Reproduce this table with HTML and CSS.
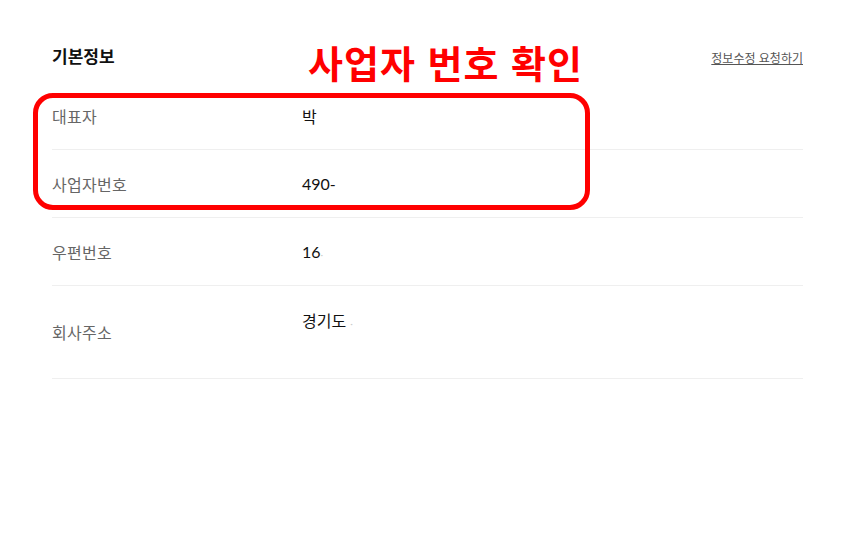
FILE: index.html
```html
<!DOCTYPE html>
<html lang="ko">
<head>
<meta charset="utf-8">
<link rel="stylesheet" href="styles.css">
</head>
<body>
<div class="page">
  <div class="header">
    <h2 class="title">기본정보</h2>
    <a class="edit-link" href="#">정보수정 요청하기</a>
  </div>
  <div class="rows">
    <div class="row"><div class="label">대표자</div><div class="value">박</div></div>
    <div class="row"><div class="label">사업자번호</div><div class="value">490-</div></div>
    <div class="row"><div class="label">우편번호</div><div class="value">16<span class="faint">·</span></div></div>
    <div class="row row-tall"><div class="label">회사주소</div><div class="value value-top">경기도 <span class="faint">·</span></div></div>
  </div>
  <div class="annotation-text">사업자 번호 확인</div>
  <div class="annotation-box"></div>
</div>
</body>
</html>
```
FILE: styles.css
```css
* { box-sizing: border-box; }
html, body { margin: 0; padding: 0; background: #fff; }
body { font-family: Lato, "Noto Sans CJK KR", sans-serif; color: #222; }
.page { position: relative; width: 844px; height: 544px; padding: 0 41px 0 52px; }
.header { display: flex; justify-content: space-between; align-items: center; height: 82px; padding-top: 28px; }
.title { margin: 0; font-size: 17px; font-weight: 700; color: #111; font-family: "Noto Sans CJK KR", sans-serif; letter-spacing: 0; }
.edit-link { font-size: 12px; color: #555; text-decoration: underline; font-family: "Noto Sans CJK KR", sans-serif; letter-spacing: 0; margin-top: 4px; }
.row { display: grid; grid-template-columns: 250px 1fr; align-items: center; height: 68px; border-bottom: 1px solid #efefef; }
.row-tall { height: 93px; }
.label { font-size: 16px; color: #666; font-family: "Noto Sans CJK KR", sans-serif; letter-spacing: 0.3px; }
.value { font-size: 16px; color: #111; font-family: Lato, "Noto Sans CJK KR", sans-serif; }
.value-top { align-self: start; padding-top: 22px; }
.faint { color: #ccc; font-size: 10px; }
.annotation-text { position: absolute; left: 308px; top: 37px; font-size: 38px; font-weight: 700; color: #ff0000; font-family: "Noto Sans CJK KR", sans-serif; line-height: 50px; letter-spacing: 1px; }
.annotation-box { position: absolute; left: 33px; top: 93px; width: 557px; height: 117px; border: 5px solid #ff0000; border-radius: 20px; }
```
